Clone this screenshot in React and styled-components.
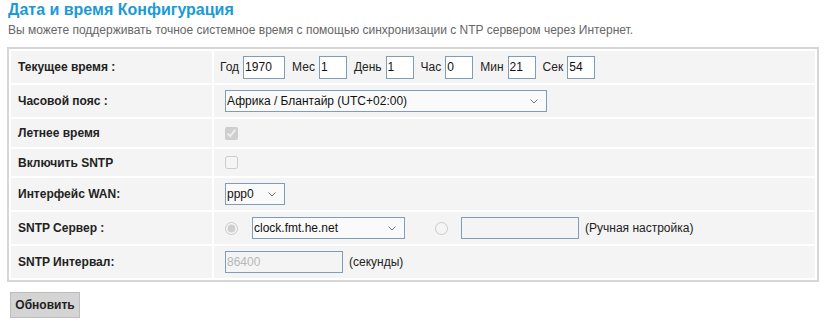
import React from "react";
import styled, { createGlobalStyle } from "styled-components";

const GlobalStyle = createGlobalStyle`
	body {
		margin: 0;
		background: #fff;
		font-family: "Liberation Sans", Arial, sans-serif;
		color: #222;
	}
`;

const chevron =
	"url(\"data:image/svg+xml;utf8,<svg xmlns='http://www.w3.org/2000/svg' width='8' height='5' viewBox='0 0 8 5'><path d='M0.5 0.5 L4 4 L7.5 0.5' fill='none' stroke='%23777' stroke-width='1'/></svg>\")";

const Page = styled.div`
	padding: 0 6px 0 7px;
`;

const Title = styled.h1`
	margin: 0;
	padding-left: 1px;
	font-size: 16px;
	line-height: 20px;
	font-weight: bold;
	color: #1a9ad6;
`;

const Subtitle = styled.p`
	margin: 2px 0 0;
	padding-left: 1px;
	font-size: 12px;
	line-height: 16px;
	color: #666;
`;

const Table = styled.div`
	margin-top: 9px;
	display: grid;
	grid-template-columns: 201px 1fr;
	gap: 2px;
	padding: 2px;
	border: 2px solid #d6d6d6;
`;

const LabelCell = styled.div`
	height: ${(props) => props.h}px;
	background: #f4f4f4;
	display: flex;
	align-items: center;
	padding-left: 7px;
	font-size: 12px;
	font-weight: bold;
	color: #222;
`;

const ValueCell = styled.div`
	height: ${(props) => props.h}px;
	background: #f4f4f4;
	display: flex;
	align-items: center;
	padding-left: 6px;
	font-size: 12px;
	color: #222;
`;

const Pair = styled.span`
	display: flex;
	align-items: center;
	gap: 4px;
	margin-right: 7px;
`;

const TextInput = styled.input`
	box-sizing: border-box;
	width: ${(props) => props.w}px;
	height: ${(props) => props.h || 23}px;
	margin: 0 0 0 ${(props) => props.ml || 0}px;
	padding: 0 1px;
	border: 1px solid #7f9db9;
	border-radius: 0;
	background: ${(props) => (props.disabled ? "#f4f4f4" : "#fff")};
	font-family: "Liberation Sans", Arial, sans-serif;
	font-size: 12px;
	color: ${(props) => (props.disabled ? "#b8b8b8" : "#111")};
	outline: none;
`;

const Select = styled.select`
	box-sizing: border-box;
	width: ${(props) => props.w}px;
	height: 22px;
	margin: 0 0 0 ${(props) => props.ml || 0}px;
	padding: 0 18px 0 1px;
	border: 1px solid #7f9db9;
	border-radius: 0;
	appearance: none;
	background: #fafafa ${chevron} no-repeat right 8px center;
	font-family: "Liberation Sans", Arial, sans-serif;
	font-size: 12px;
	color: #111;
	outline: none;
`;

const Check = styled.input`
	width: 13px;
	height: 13px;
	margin: 0 0 0 5px;
`;

const Note = styled.span`
	margin-left: ${(props) => props.ml}px;
`;

const Button = styled.button`
	margin: 10px 0 0 3px;
	width: 70px;
	height: 26px;
	padding: 0;
	border: 1px solid #bdbdbd;
	border-radius: 0;
	background: #d4d4d4;
	font-family: "Liberation Sans", Arial, sans-serif;
	font-size: 12px;
	font-weight: bold;
	color: #222;
`;

const timeFields = [
	{ label: "Год", value: "1970", w: 42 },
	{ label: "Мес", value: "1", w: 28 },
	{ label: "День", value: "1", w: 28 },
	{ label: "Час", value: "0", w: 28 },
	{ label: "Мин", value: "21", w: 28 },
	{ label: "Сек", value: "54", w: 28 },
];

const App = () => {
	return (
		<>
			<GlobalStyle />
			<Page>
				<Title>Дата и время Конфигурация</Title>
				<Subtitle>
					Вы можете поддерживать точное системное время с помощью
					синхронизации с NTP сервером через Интернет.
				</Subtitle>
				<Table>
					<LabelCell h={32}>Текущее время :</LabelCell>
					<ValueCell h={32}>
						{timeFields.map((f) => (
							<Pair key={f.label}>
								{f.label}
								<TextInput w={f.w} defaultValue={f.value} />
							</Pair>
						))}
					</ValueCell>

					<LabelCell h={32}>Часовой пояс :</LabelCell>
					<ValueCell h={32}>
						<Select w={322} ml={5} defaultValue="blantyre">
							<option value="blantyre">
								Африка / Блантайр (UTC+02:00)
							</option>
						</Select>
					</ValueCell>

					<LabelCell h={28}>Летнее время</LabelCell>
					<ValueCell h={28}>
						<Check type="checkbox" defaultChecked disabled />
					</ValueCell>

					<LabelCell h={27}>Включить SNTP</LabelCell>
					<ValueCell h={27}>
						<Check type="checkbox" disabled />
					</ValueCell>

					<LabelCell h={32}>Интерфейс WAN:</LabelCell>
					<ValueCell h={32}>
						<Select w={60} ml={5} defaultValue="ppp0">
							<option value="ppp0">ppp0</option>
						</Select>
					</ValueCell>

					<LabelCell h={32}>SNTP Сервер :</LabelCell>
					<ValueCell h={32}>
						<Check
							type="radio"
							name="srv"
							defaultChecked
							disabled
						/>
						<Select w={153} ml={14} defaultValue="fmt">
							<option value="fmt">clock.fmt.he.net</option>
						</Select>
						<Check
							type="radio"
							name="srv"
							disabled
							style={{ marginLeft: 30 }}
						/>
						<TextInput w={118} h={22} ml={13} disabled />
						<Note ml={6}>(Ручная настройка)</Note>
					</ValueCell>

					<LabelCell h={32}>SNTP Интервал:</LabelCell>
					<ValueCell h={32}>
						<TextInput
							w={118}
							h={22}
							ml={5}
							defaultValue="86400"
							disabled
						/>
						<Note ml={6}>(секунды)</Note>
					</ValueCell>
				</Table>
				<Button>Обновить</Button>
			</Page>
		</>
	);
};

export default App;
